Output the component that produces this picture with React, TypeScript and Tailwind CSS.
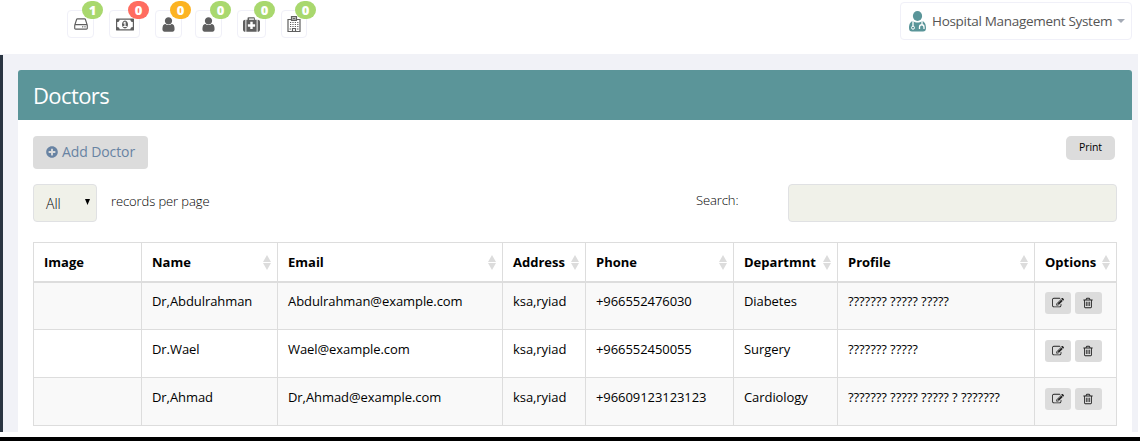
import React from "react";
import { FaPlusCircle } from "react-icons/fa";

type GlyphProps = { d: string; box?: string; className: string };

function Glyph({ d, box = "0 0 1792 1792", className }: GlyphProps) {
  return (
    <svg viewBox={box} fill="currentColor" className={className}>
      <path d={d} />
    </svg>
  );
}

const HDD =
  "M1168 1216q0 33-23.5 56.5t-56.5 23.5-56.5-23.5-23.5-56.5 23.5-56.5 56.5-23.5 56.5 23.5 23.5 56.5zm256 0q0 33-23.5 56.5t-56.5 23.5-56.5-23.5-23.5-56.5 23.5-56.5 56.5-23.5 56.5 23.5 23.5 56.5zm112 160v-320q0-13-9.5-22.5t-22.5-9.5h-1216q-13 0-22.5 9.5t-9.5 22.5v320q0 13 9.5 22.5t22.5 9.5h1216q13 0 22.5-9.5t9.5-22.5zm-1230-480h1180l-157-482q-4-13-16-21.5t-26-8.5h-782q-14 0-26 8.5t-16 21.5zm1358 160v320q0 66-47 113t-113 47h-1216q-66 0-113-47t-47-113v-320q0-25 16-75l197-606q17-53 63-86t101-33h782q55 0 101 33t63 86l197 606q16 50 16 75z";
const MONEY =
  "M768 1152h384v-96h-128v-448h-114l-148 137 77 80q42-37 55-57h2v288h-128v96zm512-256q0 70-21 142t-59.5 134-101.5 101-138 39-138-39-101.5-101-59.5-134-21-142 21-142 59.5-134 101.5-101 138-39 138 39 101.5 101 59.5 134 21 142zm512 256v-512q-106 0-181-75t-75-181h-1152q0 106-75 181t-181 75v512q106 0 181 75t75 181h1152q0-106 75-181t181-75zm128-832v1152q0 26-19 45t-45 19h-1792q-26 0-45-19t-19-45v-1152q0-26 19-45t45-19h1792q26 0 45 19t19 45z";
const USER =
  "M1536 1399q0 109-62.5 187t-150.5 78h-854q-88 0-150.5-78t-62.5-187q0-85 8.5-160.5t31.5-152 58.5-131 94-89 134.5-34.5q131 128 313 128t313-128q76 0 134.5 34.5t94 89 58.5 131 31.5 152 8.5 160.5zm-256-887q0 159-112.5 271.5t-271.5 112.5-271.5-112.5-112.5-271.5 112.5-271.5 271.5-112.5 271.5 112.5 112.5 271.5z";
const MEDKIT =
  "M1280 1088v-192q0-14-9-23t-23-9h-224v-224q0-14-9-23t-23-9h-192q-14 0-23 9t-9 23v224h-224q-14 0-23 9t-9 23v192q0 14 9 23t23 9h224v224q0 14 9 23t23 9h192q14 0 23-9t9-23v-224h224q14 0 23-9t9-23zm-640-704h512v-128h-512v128zm-384 0v1280h-32q-92 0-158-66t-66-158v-832q0-92 66-158t158-66h32zm1184 0v1280h-1088v-1280h128v-160q0-40 28-68t68-28h576q40 0 68 28t28 68v160h128zm352 224v832q0 92-66 158t-158 66h-32v-1280h32q92 0 158 66t66 158z";
const TRASH =
  "M704 736v576q0 14-9 23t-23 9h-64q-14 0-23-9t-9-23v-576q0-14 9-23t23-9h64q14 0 23 9t9 23zm256 0v576q0 14-9 23t-23 9h-64q-14 0-23-9t-9-23v-576q0-14 9-23t23-9h64q14 0 23 9t9 23zm256 0v576q0 14-9 23t-23 9h-64q-14 0-23-9t-9-23v-576q0-14 9-23t23-9h64q14 0 23 9t9 23zm128 724v-948h-896v948q0 22 7 40.5t14.5 27 10.5 8.5h832q3 0 10.5-8.5t14.5-27 7-40.5zm-672-1076h448l-48-117q-7-9-17-11h-317q-10 2-17 11zm928 32v64q0 14-9 23t-23 9h-96v948q0 83-47 143.5t-113 60.5h-832q-66 0-113-58.5t-47-141.5v-952h-96q-14 0-23-9t-9-23v-64q0-14 9-23t23-9h309l70-167q15-37 54-63t79-26h320q40 0 79 26t54 63l70 167h309q14 0 23 9t9 23z";
const EDIT =
  "M888 1184l116-116-152-152-116 116v56h96v96h56zm440-720q-16-16-33 1l-350 350q-17 17-1 33t33-1l350-350q17-17 1-33zm80 594v190q0 119-84.5 203.5t-203.5 84.5h-832q-119 0-203.5-84.5t-84.5-203.5v-832q0-119 84.5-203.5t203.5-84.5h832q63 0 117 25 15 7 18 23 3 17-9 29l-49 49q-14 14-32 8-23-6-45-6h-832q-66 0-113 47t-47 113v832q0 66 47 113t113 47h832q66 0 113-47t47-113v-126q0-13 9-22l64-64q15-15 35-7t20 29zm-96-738l288 288-672 672h-288v-288zm444 132l-92 92-288-288 92-92q28-28 68-28t68 28l152 152q28 28 28 68t-28 68z";

function HospitalIcon() {
  return (
    <svg viewBox="0 0 14 16" className="h-4 w-3.5" fill="none" stroke="currentColor">
      <path strokeWidth="1.200" d="M4.5 3.5H1V15.5H13V3.5H9.500M4.500 4.500V.5H9.500V4.500ZM5.500 15V12.500H8.500V15" />
      <path d="M6 1.200V4M8 1.200V4M6 2.600H8" />
      <path d="M3 6.500H11.500M3 8.500H11.500M3 10.500H11.500" strokeDasharray="1.200 1.200" />
      <path d="M2.500 13H4M10 13H11.500" />
    </svg>
  );
}

function DoctorIcon() {
  return (
    <svg viewBox="0 0 17 21" className="h-[21px] w-[17px] shrink-0 text-[#5a9599]">
      <ellipse cx="8.500" cy="5" rx="4.600" ry="5" fill="currentColor" />
      <path
        d="M4 10C6.500 12 10.500 12 13 10C16 10.500 17 14 17 17C17 19.500 16 20.500 14 20.500H3C1 20.500 0 19.500 0 17C0 14 1 10.500 4 10Z"
        fill="currentColor"
      />
      <path
        d="M4 10V15.500M13 10V13.500M10.500 18V16C10.500 13 15 13 15 16V18"
        fill="none"
        stroke="white"
        strokeWidth="1.300"
      />
      <circle cx="4" cy="16.700" r="1.500" fill="currentColor" stroke="white" />
    </svg>
  );
}

function SortArrows() {
  return (
    <svg viewBox="0 0 8 15" className="h-[15px] w-2 shrink-0 fill-[#dcdcdc]">
      <path d="M4 0L8 7H0ZM0 8H8L4 15Z" />
    </svg>
  );
}

const notifications = [
  { icon: <Glyph d={HDD} className="size-4" />, count: 1, box: "w-[27px] mr-[15px]", badge: "bg-[#a9d86e]" },
  { icon: <Glyph d={MONEY} box="0 0 1920 1792" className="h-[17px] w-[18px]" />, count: 0, box: "w-[31px] mr-[15px]", badge: "bg-[#ff6c60]" },
  { icon: <Glyph d={USER} className="size-[17px]" />, count: 0, box: "w-[27px] mr-[13px]", badge: "bg-[#fcb322]" },
  { icon: <Glyph d={USER} className="size-[17px]" />, count: 0, box: "w-[27px] mr-[15px]", badge: "bg-[#a9d86e]" },
  { icon: <Glyph d={MEDKIT} className="size-[17px]" />, count: 0, box: "w-[29px] mr-[15px]", badge: "bg-[#a9d86e]" },
  { icon: <HospitalIcon />, count: 0, box: "w-[26px]", badge: "bg-[#a9d86e]" },
];

const columns = [
  { label: "Image", width: "w-[108px]", sortable: false },
  { label: "Name", width: "w-[136px]", sortable: true },
  { label: "Email", width: "w-[225px]", sortable: true },
  { label: "Address", width: "w-[83px]", sortable: true },
  { label: "Phone", width: "w-[148px]", sortable: true },
  { label: "Departmnt", width: "w-[104px]", sortable: true },
  { label: "Profile", width: "w-[197px]", sortable: true },
  { label: "Options", width: "w-[82px]", sortable: true },
];

const doctors = [
  ["", "Dr,Abdulrahman", "Abdulrahman@example.com", "ksa,ryiad", "+966552476030", "Diabetes", "??????? ????? ?????"],
  ["", "Dr.Wael", "Wael@example.com", "ksa,ryiad", "+966552450055", "Surgery", "??????? ?????"],
  ["", "Dr,Ahmad", "Dr,Ahmad@example.com", "ksa,ryiad", "+96609123123123", "Cardiology", "??????? ????? ????? ? ???????"],
];

export default function App() {
  return (
    <div className="flex h-[441px] w-[1140px] flex-col overflow-hidden bg-white font-['Open_Sans',sans-serif] text-[13px] text-black">
      <header className="flex h-[54px] shrink-0 items-start justify-between pr-2 pl-[67px]">
        <div className="flex pt-2.5">
          {notifications.map((n, i) => (
            <button
              key={i}
              className={`relative flex h-7 items-center justify-center rounded-[4px] border border-[#f0f0f8] text-[#5f5f5f] ${n.box}`}
            >
              {n.icon}
              <span
                className={`absolute -top-[10px] -right-[10px] flex h-[18px] w-[21px] items-center justify-center rounded-[10px] text-[13px] leading-none font-extrabold text-white ${n.badge}`}
              >
                {n.count}
              </span>
            </button>
          ))}
        </div>
        <button className="mt-0.5 flex h-[38px] w-[232px] items-center rounded-[4px] border border-[#f0f0f8] pl-2 text-[14px] text-[#555]">
          <DoctorIcon />
          <span className="ml-[6px] w-[180px] shrink-0 text-left text-[13.5px] tracking-[-0.3px] whitespace-nowrap">
            Hospital Management System
          </span>
          <svg viewBox="0 0 8 4" className="ml-[5px] h-1 w-2 shrink-0 fill-[#a4aab5]">
            <path d="M0 0H8L4 4Z" />
          </svg>
        </button>
      </header>

      <div className="flex h-[378px] w-[1138px] shrink-0 bg-[#f1f2f7]">
        <div className="mt-px w-[3px] bg-[#2a3542]" />
        <main className="mt-4 ml-[15px] w-[1114px] rounded-t-[4px] bg-white">
          <h1 className="flex h-[50px] items-center rounded-t-[3px] bg-[#5b9599] pl-[15px] text-[22px] tracking-[-0.6px] text-white">
            Doctors
          </h1>

          <div className="flex items-start justify-between pt-4 pr-[17px] pl-[15px]">
            <button className="flex h-[33px] w-[115px] items-center gap-1 rounded-[4px] bg-[#dcdcdc] pb-0.5 pl-[13px] text-[14px] tracking-[-0.1px] whitespace-nowrap text-[#6883a3]">
              <FaPlusCircle className="size-3 shrink-0" />
              Add Doctor
            </button>
            <button className="flex h-6 w-[49px] items-center justify-center rounded-[5px] bg-[#dcdcdc] text-[10.5px] tracking-[-0.1px]">
              Print
            </button>
          </div>

          <div className="mt-[15px] flex items-start pl-[15px]">
            <div className="flex h-[38px] w-16 items-center justify-between rounded-[4px] border border-[#e0e1e3] bg-[#f0f1e9] pr-1.5 pl-3 text-[14px] font-light">
              All
              <svg viewBox="0 0 5 6" className="mb-0.5 h-1.5 w-[5px] fill-black">
                <path d="M0 0H5L2.500 6Z" />
              </svg>
            </div>
            <span className="ml-[14px] w-[585px] pt-2 font-light tracking-[-0.1px]">records per page</span>
            <span className="w-[92px] pt-[7px] font-light tracking-[-0.1px]">Search:</span>
            <div className="h-[38px] w-[329px] rounded-[4px] border border-[#e0e1e3] bg-[#f0f1e9]" />
          </div>

          <table className="mt-5 ml-[15px] w-[1084px] table-fixed border-separate border-spacing-0 border-t border-l border-[#dddddd]">
            <thead>
              <tr>
                {columns.map((c) => (
                  <th
                    key={c.label}
                    className={`h-10 border-r border-b-2 border-[#dddddd] p-0 pl-2.5 text-left font-bold ${c.width}`}
                  >
                    <div className="flex items-center justify-between pr-1.5 whitespace-nowrap">
                      <span className="pt-0.5">{c.label}</span>
                      {c.sortable && <SortArrows />}
                    </div>
                  </th>
                ))}
              </tr>
            </thead>
            <tbody>
              {doctors.map((row) => (
                <tr key={row[1]} className="group odd:bg-[#f9f9f9]">
                  {row.map((cell, i) => (
                    <td
                      key={i}
                      className="h-12 border-r border-b border-[#dddddd] p-0 pt-[9px] pl-2.5 align-top leading-[21px] tracking-[-0.07px] whitespace-nowrap group-first:h-[47px] group-first:pt-2"
                    >
                      {cell}
                    </td>
                  ))}
                  <td className="border-r border-b border-[#dddddd] p-0 align-top">
                    <div className="flex gap-1 pt-2.5 pl-2.5 text-[#222] group-first:pt-[9px]">
                      <button className="flex h-[22px] w-[26px] items-center justify-center rounded-[3px] bg-[#dcdcdc] pr-px">
                        <Glyph d={EDIT} className="size-3" />
                      </button>
                      <button className="flex h-[22px] w-[27px] items-center justify-center rounded-[3px] bg-[#dcdcdc] pr-px">
                        <Glyph d={TRASH} className="size-3" />
                      </button>
                    </div>
                  </td>
                </tr>
              ))}
            </tbody>
          </table>
        </main>
      </div>
      <div className="mt-[5px] h-1 bg-black" />
    </div>
  );
}
